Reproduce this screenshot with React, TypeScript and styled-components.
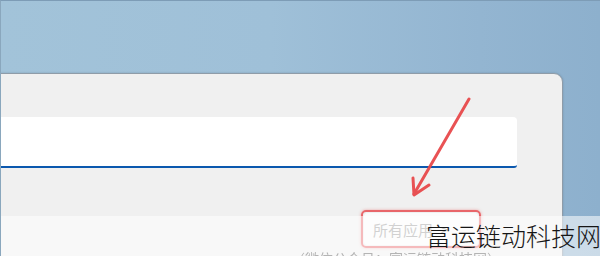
import React from 'react';
import styled, { createGlobalStyle } from 'styled-components';

const GlobalStyle = createGlobalStyle`
  html, body {
    margin: 0;
    padding: 0;
  }
  body {
    font-family: "Noto Sans CJK SC", "Noto Sans", sans-serif;
  }
`;

const Desktop = styled.div`
  position: relative;
  width: 600px;
  height: 256px;
  overflow: hidden;
  box-sizing: border-box;
  padding: 72px 37px 0 0;
  background: linear-gradient(90deg, #a2c3d9 0%, #9fc0d8 45%, #93b5d1 80%, #8db0cd 100%);
  border-top: 1px solid #7d9cb6;
  border-left: 1px solid #8aa7bd;
`;

const StartPanel = styled.div`
  margin-left: -12px;
  height: 220px;
  box-sizing: border-box;
  padding: 43px 45px 0 0;
  background: #f0f0f0;
  border: 1px solid #8f9ca8;
  border-radius: 0 9px 0 0;
  box-shadow: 0 0 2px rgba(60, 80, 100, 0.35);
  display: flex;
  flex-direction: column;
`;

const SearchBox = styled.div`
  height: 49px;
  background: #ffffff;
  border-bottom: 2px solid #0b58ae;
  border-radius: 0 4px 3px 0;
`;

const Footer = styled.div`
  display: flex;
  justify-content: flex-end;
  padding: 42px 36px 0 0;
`;

const Highlight = styled.div`
  padding: 1px;
  border: 2px solid #e8666a;
  border-radius: 5px;
  box-shadow: 0 0 3px rgba(232, 90, 90, 0.5);
`;

const AllAppsButton = styled.div`
  width: 114px;
  height: 32px;
  box-sizing: border-box;
  padding-left: 9px;
  display: flex;
  align-items: center;
  gap: 8px;
  background: #fbfbfb;
  border-radius: 4px;
  color: #9a9a9a;
  font-size: 15px;
`;

const Chevron = styled.span`
  font-size: 13px;
  color: #777;
`;

const WatermarkStrip = styled.div`
  position: absolute;
  left: 0;
  right: 0;
  top: 215px;
  bottom: 0;
  background: rgba(255, 255, 255, 0.55);
`;

const FaintCaption = styled.div`
  position: absolute;
  left: 290px;
  top: 247px;
  font-size: 14px;
  color: #b4b4b4;
  white-space: nowrap;
  filter: blur(0.6px);
`;

const Watermark = styled.div`
  position: absolute;
  right: -1px;
  top: 216px;
  font-size: 25px;
  font-weight: 300;
  color: #161616;
  white-space: nowrap;
`;

const ArrowLayer = styled.svg`
  position: absolute;
  left: 0;
  top: 0;
  width: 600px;
  height: 256px;
  pointer-events: none;
`;

export default function App() {
  return (
    <>
      <GlobalStyle />
      <Desktop>
        <StartPanel>
          <SearchBox />
          <Footer>
            <Highlight>
              <AllAppsButton>
                所有应用
                <Chevron>&gt;</Chevron>
              </AllAppsButton>
            </Highlight>
          </Footer>
        </StartPanel>
        <WatermarkStrip />
        <FaintCaption>（微信公众号：富运链动科技网）</FaintCaption>
        <Watermark>富运链动科技网</Watermark>
        <ArrowLayer viewBox="0 0 600 256">
          <g stroke="#e8494b" strokeWidth="3" strokeLinecap="round" fill="none" opacity="0.95">
            <line x1="468" y1="98" x2="413" y2="193" />
            <polyline points="412,177 413,194 428,184" strokeLinejoin="round" />
          </g>
        </ArrowLayer>
      </Desktop>
    </>
  );
}
